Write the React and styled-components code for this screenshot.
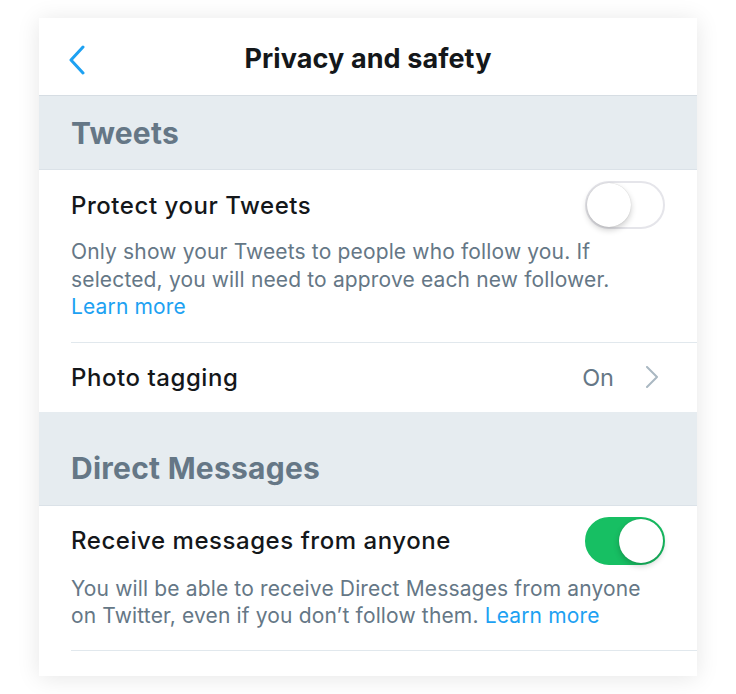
import styled, { createGlobalStyle } from "styled-components"

const GlobalStyle = createGlobalStyle`
  html, body {
    margin: 0;
    padding: 0;
    background: #ffffff;
  }
  body {
    font-family: Inter, "Liberation Sans", sans-serif;
    -webkit-font-smoothing: antialiased;
  }
`

const Page = styled.div`
  width: 736px;
  height: 694px;
  padding: 18px 39px;
  box-sizing: border-box;
  overflow: hidden;
`

const Card = styled.div`
  background: #fff;
  height: 658px;
  box-shadow: 0 2px 22px rgba(0, 0, 0, 0.1);
  overflow: hidden;
`

const Header = styled.div`
  height: 78px;
  display: grid;
  grid-template-columns: 64px 1fr 64px;
  align-items: center;
  border-bottom: 1px solid #d6dde3;
  box-sizing: border-box;
`

const Back = styled.div`
  display: flex;
  justify-content: center;
  padding-left: 12px;
  padding-top: 6px;
`

const Title = styled.h1`
  margin: 0;
  text-align: center;
  font-size: 27px;
  font-weight: 700;
  color: #14171a;
  letter-spacing: 0.1px;
  padding-top: 4px;
`

const SectionHeader = styled.div`
  background: #e6ecf0;
  height: ${p => p.$tall ? 94 : 74}px;
  box-sizing: border-box;
  display: flex;
  align-items: center;
  padding: ${p => p.$tall ? "19px" : "0"} 32px 0 32px;
  border-bottom: 1px solid #dbe2e8;
  font-size: 30px;
  font-weight: 700;
  color: #657786;
  letter-spacing: 0.25px;
`

const Row = styled.div`
  margin-left: 32px;
  padding: ${p => p.$pad || "0"};
  border-bottom: ${p => p.$line ? "1px solid #e1e8ed" : "none"};
`

const RowTop = styled.div`
  display: flex;
  align-items: center;
  justify-content: space-between;
  height: ${p => p.$h || 48}px;
  padding-right: 32px;
`

const RowTitle = styled.div`
  font-size: 24px;
  font-weight: 500;
  color: #14171a;
  letter-spacing: 0.55px;
`

const Desc = styled.p`
  margin: 9px 0 0 0;
  padding-right: 34px;
  font-size: 21px;
  line-height: 27.5px;
  color: #657786;
  letter-spacing: 0.15px;
`

const Link = styled.span`
  color: #1da1f2;
`

const Value = styled.div`
  display: flex;
  align-items: center;
  gap: 31px;
  font-size: 23.5px;
  color: #657786;
  padding-right: 6px;
`

const Switch = styled.div`
  position: relative;
  width: 80px;
  height: 48px;
  border-radius: 24px;
  box-sizing: border-box;
  background: ${p => p.$on ? "#17bf63" : "#fff"};
  border: 2px solid ${p => p.$on ? "#17bf63" : "#e5e5ea"};
`

const Knob = styled.div`
  position: absolute;
  top: 0;
  left: ${p => p.$on ? "32px" : "0"};
  width: 44px;
  height: 44px;
  border-radius: 50%;
  background: #fff;
  box-shadow: 0 3px 6px rgba(0, 0, 0, 0.2), 0 0 1px rgba(0, 0, 0, 0.2);
`

const Toggle = ({ on }) => (
  <Switch $on={on}>
    <Knob $on={on} />
  </Switch>
)

const App = () => {
  return (
    <Page>
      <GlobalStyle />
      <Card>
        <Header>
          <Back>
            <svg width="18" height="30" viewBox="0 0 18 30">
              <path d="M15 2 L3 15 L15 28" fill="none" stroke="#1da1f2" strokeWidth="3" strokeLinecap="round" strokeLinejoin="round" />
            </svg>
          </Back>
          <Title>Privacy and safety</Title>
          <div />
        </Header>

        <SectionHeader>Tweets</SectionHeader>

        <Row $line $pad="11px 0 21px 0">
          <RowTop $h={48}>
            <RowTitle>Protect your Tweets</RowTitle>
            <Toggle on={false} />
          </RowTop>
          <Desc>
            Only show your Tweets to people who follow you. If selected, you will need to approve each new follower.{" "}
            <Link>Learn more</Link>
          </Desc>
        </Row>

        <Row>
          <RowTop $h={69}>
            <RowTitle>Photo tagging</RowTitle>
            <Value>
              On
              <svg width="14" height="22" viewBox="0 0 14 22">
                <path d="M2 1 L12 11 L2 21" fill="none" stroke="#aab8c2" strokeWidth="2" strokeLinecap="round" strokeLinejoin="round" />
              </svg>
            </Value>
          </RowTop>
        </Row>

        <SectionHeader $tall>Direct Messages</SectionHeader>

        <Row $line $pad="10px 0 20px 0">
          <RowTop $h={50}>
            <RowTitle>Receive messages from anyone</RowTitle>
            <Toggle on />
          </RowTop>
          <Desc>
            You will be able to receive Direct Messages from anyone on Twitter, even if you don’t follow them.{" "}
            <Link>Learn more</Link>
          </Desc>
        </Row>
      </Card>
    </Page>
  )
}

export default App
